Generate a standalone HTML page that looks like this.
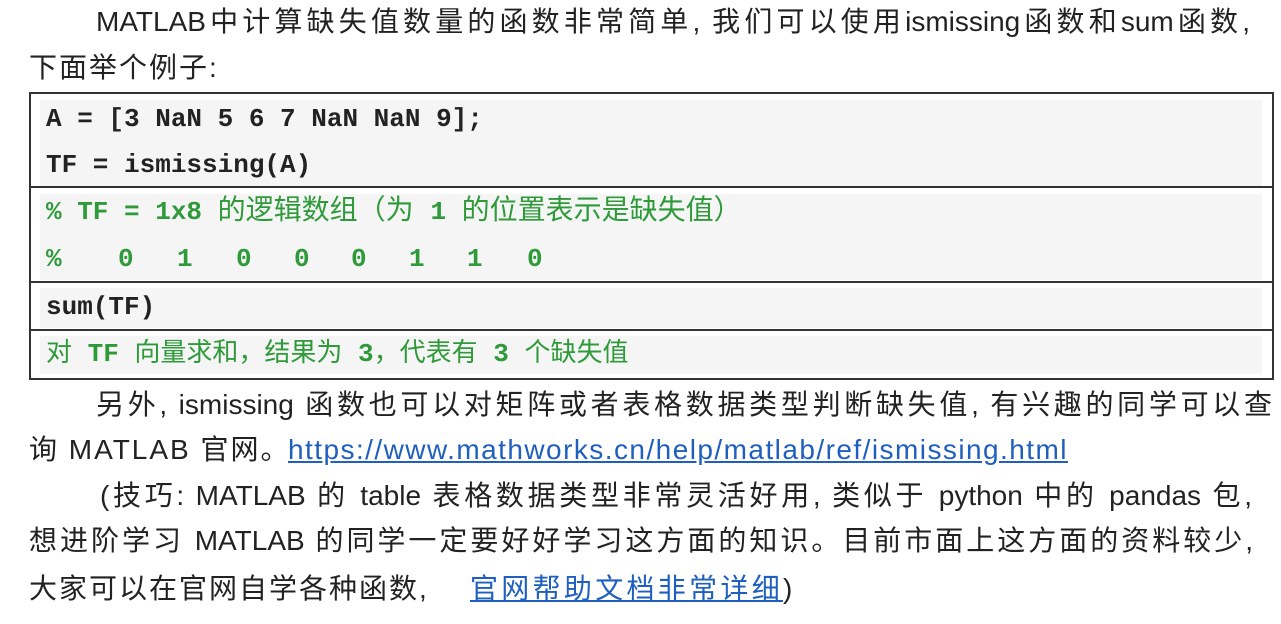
<!DOCTYPE html>
<html><head><meta charset="utf-8"><style>
body{margin:0;width:1281px;height:624px;background:#fff;position:relative;overflow:hidden;font-family:"Liberation Sans","Noto Sans CJK SC",sans-serif;color:#222}
.t{position:absolute;white-space:nowrap;font-size:28px;line-height:30px}
.j{text-align:justify;text-align-last:justify;white-space:normal}
a{color:#1f5fbf;text-decoration:underline}
.box{position:absolute;left:29px;top:92px;width:1241px;height:284px;border:2px solid #333}
.sep{position:absolute;left:29px;width:1243px;height:2px;background:#333}
.g{position:absolute;left:40px;width:1222px;background:#f5f5f5}
.c{position:absolute;left:46px;white-space:pre;font-family:"Liberation Mono","Noto Sans CJK SC",monospace;font-size:26px;line-height:30px;color:#222;font-weight:bold}
.gr{color:#2e9a3a;font-weight:normal}
.gr b{font-weight:bold}
.cj{font-size:28px}
</style></head><body>
<div class="t j" style="left:96px;top:7px;width:1154px">MATLAB中计算缺失值数量的函数非常简单, 我们可以使用ismissing函数和sum函数,</div>
<div class="t" style="left:29px;top:53px;letter-spacing:2px">下面举个例子:</div>
<div class="box"></div>
<div class="g" style="top:100px;height:86px"></div>
<div class="g" style="top:194px;height:86px"></div>
<div class="g" style="top:288px;height:40px"></div>
<div class="g" style="top:336px;height:38px"></div>
<div class="sep" style="top:186px"></div>
<div class="sep" style="top:281px"></div>
<div class="sep" style="top:329px"></div>
<div class="c" style="top:104px">A = [3 NaN 5 6 7 NaN NaN 9];</div>
<div class="c" style="top:150px">TF = ismissing(A)</div>
<div class="c gr" style="top:197px"><b>% TF = 1x8</b> <span class="cj">的逻辑数组（为 </span><b>1</b> <span class="cj">的位置表示是缺失值）</span></div>
<div class="c gr" style="top:244px"><b>%</b></div>
<div class="c gr" style="top:244px;left:118px"><b>0</b></div>
<div class="c gr" style="top:244px;left:177px"><b>1</b></div>
<div class="c gr" style="top:244px;left:236px"><b>0</b></div>
<div class="c gr" style="top:244px;left:294px"><b>0</b></div>
<div class="c gr" style="top:244px;left:351px"><b>0</b></div>
<div class="c gr" style="top:244px;left:409px"><b>1</b></div>
<div class="c gr" style="top:244px;left:467px"><b>1</b></div>
<div class="c gr" style="top:244px;left:527px"><b>0</b></div>
<div class="c" style="top:292px">sum(TF)</div>
<div class="c gr" style="top:339px">对 <b>TF</b> 向量求和，结果为 <b>3</b>，代表有 <b>3</b> 个缺失值</div>
<div class="t j" style="left:96px;top:390px;width:1176px">另外, ismissing 函数也可以对矩阵或者表格数据类型判断缺失值, 有兴趣的同学可以查</div>
<div class="t" style="left:29px;top:435px;letter-spacing:2px">询 MATLAB 官网。</div>
<div class="t" style="left:288px;top:435px;letter-spacing:1.45px"><a>https://www.mathworks.cn/help/matlab/ref/ismissing.html</a></div>
<div class="t j" style="left:100px;top:481px;width:1152px">(技巧: MATLAB 的 table 表格数据类型非常灵活好用, 类似于 python 中的 pandas 包,</div>
<div class="t j" style="left:29px;top:526px;width:1224px">想进阶学习 MATLAB 的同学一定要好好学习这方面的知识。目前市面上这方面的资料较少,</div>
<div class="t" style="left:29px;top:574px;letter-spacing:2px">大家可以在官网自学各种函数,</div>
<div class="t" style="left:470px;top:574px;letter-spacing:3.3px"><a>官网帮助文档非常详细</a>)</div>
</body></html>
